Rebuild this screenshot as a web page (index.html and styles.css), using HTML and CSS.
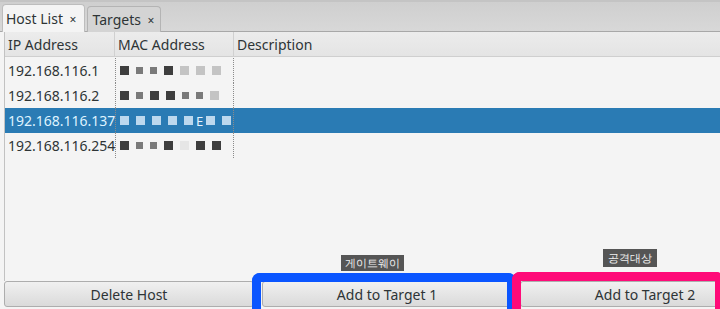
FILE: index.html
```html
<!doctype html>
<html>
<head>
	<meta charset='utf-8' />
	<title>Host List</title>
	<link rel="stylesheet" href="styles.css">
</head>
<body>
	<div class='window'>
		<div class='tabbar'>
			<div class='tab active'>Host List <span class='close'>×</span></div>
			<div class='tab'>Targets <span class='close'>×</span></div>
		</div>
		<div class='content'>
			<div class='table'>
				<div class='row head'>
					<div class='cell ip'>IP Address</div>
					<div class='cell mac'>MAC Address</div>
					<div class='cell desc'>Description</div>
				</div>
				<div class='row'>
					<div class='cell ip'>192.168.116.1</div>
					<div class='cell mac blur'><i class='d'></i><i class='m'></i><i class='m'></i><i class='d'></i><i class='l'></i><i class='l'></i><i class='l'></i></div>
					<div class='cell desc'></div>
				</div>
				<div class='row'>
					<div class='cell ip'>192.168.116.2</div>
					<div class='cell mac blur'><i class='d'></i><i class='m'></i><i class='d'></i><i class='d'></i><i class='m'></i><i class='m'></i><i class='l'></i></div>
					<div class='cell desc'></div>
				</div>
				<div class='row selected'>
					<div class='cell ip'>192.168.116.137</div>
					<div class='cell mac blur'><i class='s'></i><i class='s'></i><i class='s'></i><i class='s'></i><i class='s'></i><span class='e'>E</span><i class='s'></i><i class='s'></i></div>
					<div class='cell desc'></div>
				</div>
				<div class='row'>
					<div class='cell ip'>192.168.116.254</div>
					<div class='cell mac blur'><i class='d'></i><i class='m'></i><i class='m'></i><i class='d'></i><i class='x'></i><i class='d'></i><i class='d'></i></div>
					<div class='cell desc'></div>
				</div>
			</div>
		</div>
		<div class='buttons'>
			<button class='btn'>Delete Host</button>
			<button class='btn'>Add to Target 1</button>
			<button class='btn'>Add to Target 2</button>
		</div>

		<!-- annotations drawn over the screenshot -->
		<div class='mark blue'></div>
		<div class='mark pink'></div>
		<div class='tip tip1'>게이트웨이</div>
		<div class='tip tip2'>공격대상</div>
	</div>
</body>
</html>
```
FILE: styles.css
```css
/*reset*/
html,body{margin:0;padding:0;}
body{background:#f4f4f4;font-family:"Noto Sans","DejaVu Sans",sans-serif;font-size:14px;color:#2e3436;}

.window{position:relative;width:720px;height:309px;overflow:hidden;display:flex;flex-direction:column;}

/*tabs*/
.tabbar{height:32px;box-sizing:border-box;display:flex;align-items:flex-end;gap:2px;padding:0 0 0 2px;background:linear-gradient(#cfcfcf,#d8d8d8);border-top:2px solid #c4c4c4;border-bottom:1px solid #a8a8a8;}
.tab{height:26px;box-sizing:border-box;padding:3px 6px 0 4px;border:1px solid #b4b4b4;border-bottom:none;border-radius:4px 4px 0 0;background:#d4d4d4;white-space:nowrap;margin-bottom:-1px;}
.tab.active{height:28px;background:#f4f4f4;border-color:#bdbdbd;padding:4px 8px 0 3px;}
.close{font-size:12px;margin-left:3px;}

/*table*/
.content{flex:1;margin-left:4px;border-left:1px solid #c2c2c2;}
.row{display:flex;height:25px;align-items:center;}
.row.head{height:24px;background:linear-gradient(#ececec,#e4e4e4);border-bottom:1px solid #cfcfcf;margin-bottom:1px;}
.cell{box-sizing:border-box;height:100%;display:flex;align-items:center;padding-left:3px;white-space:nowrap;}
.ip{width:110px;}
.mac{width:119px;}
.desc{flex:1;}
.head .cell{border-right:1px solid #d0d0d0;}
.head .desc{border-right:none;}
.blur{border-left:1px dotted #8a8a8a;border-right:1px dotted #8a8a8a;gap:7px;padding-left:4px;}
.blur i{display:inline-block;width:9px;height:9px;background:#8c8c8c;}
.blur i.d{background:#3e3e3e;}
.blur i.m{background:#7a7a7a;width:7px;height:7px;}
.blur i.l{background:#c4c4c4;}
.blur i.x{background:#e6e6e6;}
.blur i.s{background:#bcd8ee;}
.blur .e{color:#e8f4ff;font-size:13px;margin:0 -4px;}

.row.selected{background:#2a7bb4;color:#dff3ff;}

/*buttons*/
.buttons{display:grid;grid-template-columns:250px 250px 250px;gap:8px;padding:0 4px 2px 4px;}
.btn{height:26px;border:1px solid #adadad;border-radius:3px;background:linear-gradient(#f0f0f0,#dadada);font-family:inherit;font-size:14px;color:#2e3436;padding:0;}

/*annotations*/
.mark{position:absolute;box-sizing:border-box;border-radius:8px 8px 0 0;}
.blue{left:252px;top:273px;width:264px;height:40px;border:9px solid #0a55ff;border-bottom:none;}
.pink{left:512px;top:272px;width:212px;height:40px;border:9px solid #ff0a78;border-bottom:none;}
.tip{position:absolute;background:#555;color:#f0f0f0;font-size:11px;padding:1px 4px;line-height:14px;}
.tip1{left:341px;top:255px;}
.tip2{left:603px;top:249px;padding:2px 5px;}
```
